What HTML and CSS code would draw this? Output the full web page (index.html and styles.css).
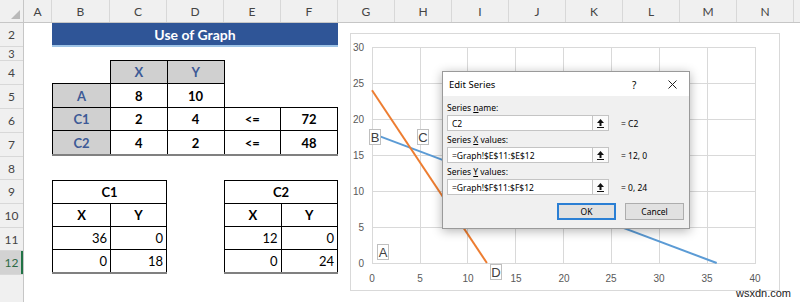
FILE: index.html
```html
<!DOCTYPE html>
<html lang="en">
<head>
  <meta charset="UTF-8" />
  <meta name="viewport" content="width=device-width, initial-scale=1.0"/>
  <title>Use of Graph</title>
  <link rel="stylesheet" href="styles.css">
</head>
<body>
  <div class="sheet">
    <div class="corner"><span class="corner-tri"></span></div>

    <div class="col-heads">
      <div class="ch ch-a">A</div>
      <div class="ch ch-b">B</div>
      <div class="ch">C</div>
      <div class="ch">D</div>
      <div class="ch">E</div>
      <div class="ch">F</div>
      <div class="ch">G</div>
      <div class="ch">H</div>
      <div class="ch">I</div>
      <div class="ch">J</div>
      <div class="ch">K</div>
      <div class="ch">L</div>
      <div class="ch">M</div>
      <div class="ch">N</div>
      <div class="ch ch-rest"></div>
    </div>

    <div class="row-heads">
      <div class="rh">2</div>
      <div class="rh rh-short">3</div>
      <div class="rh">4</div>
      <div class="rh">5</div>
      <div class="rh">6</div>
      <div class="rh">7</div>
      <div class="rh rh-23">8</div>
      <div class="rh">9</div>
      <div class="rh">10</div>
      <div class="rh rh-23">11</div>
      <div class="rh rh-sel">12</div>
      <div class="rh rh-rest"></div>
    </div>

    <div class="cells">
      <div class="title">Use of Graph</div>

      <table class="grid t1">
        <colgroup><col style="width:58px"><col><col><col><col></colgroup>
        <tr>
          <td class="blank"></td>
          <td class="hd">X</td>
          <td class="hd">Y</td>
          <td class="blank"></td>
          <td class="blank"></td>
        </tr>
        <tr>
          <td class="hd">A</td>
          <td>8</td>
          <td>10</td>
          <td class="blank"></td>
          <td class="blank"></td>
        </tr>
        <tr>
          <td class="hd">C1</td>
          <td>2</td>
          <td>4</td>
          <td>&lt;=</td>
          <td>72</td>
        </tr>
        <tr>
          <td class="hd">C2</td>
          <td>4</td>
          <td>2</td>
          <td>&lt;=</td>
          <td>48</td>
        </tr>
      </table>

      <table class="grid t2">
        <colgroup><col style="width:58px"><col></colgroup>
        <tr><td colspan="2">C1</td></tr>
        <tr><td>X</td><td>Y</td></tr>
        <tr><td class="num">36</td><td class="num">0</td></tr>
        <tr><td class="num">0</td><td class="num">18</td></tr>
      </table>

      <table class="grid t3">
        <tr><td colspan="2">C2</td></tr>
        <tr><td>X</td><td>Y</td></tr>
        <tr><td class="num">12</td><td class="num">0</td></tr>
        <tr><td class="num">0</td><td class="num">24</td></tr>
      </table>

      <div class="chart">
        <svg width="430" height="258" viewBox="0 0 430 258">
          <g class="gridlines">
            <line x1="22.5" y1="14" x2="22.5" y2="230.5"/>
            <line x1="70.5" y1="14" x2="70.5" y2="230.5"/>
            <line x1="117.5" y1="14" x2="117.5" y2="230.5"/>
            <line x1="165.5" y1="14" x2="165.5" y2="230.5"/>
            <line x1="213.5" y1="14" x2="213.5" y2="230.5"/>
            <line x1="261.5" y1="14" x2="261.5" y2="230.5"/>
            <line x1="309.5" y1="14" x2="309.5" y2="230.5"/>
            <line x1="357.5" y1="14" x2="357.5" y2="230.5"/>
            <line x1="405.5" y1="14" x2="405.5" y2="230.5"/>
            <line x1="22" y1="14.5" x2="406" y2="14.5"/>
            <line x1="22" y1="50.5" x2="406" y2="50.5"/>
            <line x1="22" y1="86.5" x2="406" y2="86.5"/>
            <line x1="22" y1="122.5" x2="406" y2="122.5"/>
            <line x1="22" y1="158.5" x2="406" y2="158.5"/>
            <line x1="22" y1="194.5" x2="406" y2="194.5"/>
            <line x1="22" y1="230.5" x2="406" y2="230.5"/>
          </g>
          <g class="axis-y">
            <text x="14" y="18">30</text>
            <text x="14" y="54">25</text>
            <text x="14" y="90">20</text>
            <text x="14" y="126">15</text>
            <text x="14" y="162">10</text>
            <text x="14" y="198">5</text>
            <text x="14" y="234">0</text>
          </g>
          <g class="axis-x">
            <text x="22" y="249">0</text>
            <text x="70" y="249">5</text>
            <text x="118" y="249">10</text>
            <text x="166" y="249">15</text>
            <text x="214" y="249">20</text>
            <text x="261" y="249">25</text>
            <text x="309" y="249">30</text>
            <text x="357" y="249">35</text>
            <text x="405" y="249">40</text>
          </g>
          <line class="s-c1" x1="22" y1="100.4" x2="366.7" y2="230"/>
          <line class="s-c2" x1="22" y1="57.2" x2="136.9" y2="230"/>
          <g class="pt">
            <rect x="27.5" y="211.5" width="11" height="15"/>
            <text x="33" y="224">A</text>
            <rect x="19.5" y="96.5" width="11" height="15"/>
            <text x="25" y="109">B</text>
            <rect x="67.5" y="96.5" width="11" height="15"/>
            <text x="73" y="109">C</text>
            <rect x="140.5" y="231.5" width="11" height="15"/>
            <text x="146" y="244">D</text>
          </g>
        </svg>
      </div>

      <div class="dialog">
        <div class="dlg-title">
          <span class="dlg-name">Edit Series</span>
          <span class="dlg-help">?</span>
          <svg class="dlg-close" width="9" height="9" viewBox="0 0 9 9">
            <path d="M0.5 0.5 L8.5 8.5 M8.5 0.5 L0.5 8.5" stroke="#222" stroke-width="1" fill="none"/>
          </svg>
        </div>
        <div class="dlg-body">
          <div class="field">
            <div class="lbl">Series <u>n</u>ame:</div>
            <div class="field-row">
              <div class="input">C2</div>
              <div class="ref-btn">
                <svg width="7" height="9" viewBox="0 0 7 9"><path d="M3.5 0 L7 4 L4.5 4 L4.5 7 L2.5 7 L2.5 4 L0 4 Z M0 8 H7 V9 H0 Z" fill="#111"/></svg>
              </div>
              <div class="val">= C2</div>
            </div>
          </div>
          <div class="field">
            <div class="lbl">Series <u>X</u> values:</div>
            <div class="field-row">
              <div class="input">=Graph!$E$11:$E$12</div>
              <div class="ref-btn">
                <svg width="7" height="9" viewBox="0 0 7 9"><path d="M3.5 0 L7 4 L4.5 4 L4.5 7 L2.5 7 L2.5 4 L0 4 Z M0 8 H7 V9 H0 Z" fill="#111"/></svg>
              </div>
              <div class="val">= 12, 0</div>
            </div>
          </div>
          <div class="field">
            <div class="lbl">Series <u>Y</u> values:</div>
            <div class="field-row">
              <div class="input">=Graph!$F$11:$F$12</div>
              <div class="ref-btn">
                <svg width="7" height="9" viewBox="0 0 7 9"><path d="M3.5 0 L7 4 L4.5 4 L4.5 7 L2.5 7 L2.5 4 L0 4 Z M0 8 H7 V9 H0 Z" fill="#111"/></svg>
              </div>
              <div class="val">= 0, 24</div>
            </div>
          </div>
          <div class="buttons">
            <div class="btn btn-ok">OK</div>
            <div class="btn">Cancel</div>
          </div>
        </div>
      </div>
    </div>

    <div class="watermark">wsxdn.com</div>
  </div>
</body>
</html>
```

FILE: styles.css
```css
body {
  margin: 0;
  padding: 0;
  background: #fff;
  font-family: Lato, "Liberation Sans", sans-serif;
  color: #000;
}

.sheet {
  position: relative;
  width: 800px;
  height: 302px;
  overflow: hidden;
  display: grid;
  grid-template-columns: 24px 1fr;
  grid-template-rows: 23px 1fr;
}

/* headers */
.corner {
  position: relative;
  background: #f0f0f0;
  border-right: 1px solid #c6c6c6;
  border-bottom: 1px solid #c6c6c6;
  box-sizing: border-box;
}

.corner-tri {
  position: absolute;
  right: 3px;
  bottom: 3px;
  width: 0;
  height: 0;
  border-left: 9px solid transparent;
  border-bottom: 9px solid #b9b9b9;
}

.col-heads {
  display: flex;
  background: #f0f0f0;
  border-bottom: 1px solid #c6c6c6;
  box-sizing: border-box;
}

.ch {
  flex: 0 0 57px;
  box-sizing: border-box;
  border-right: 1px solid #d8d8d8;
  display: flex;
  align-items: center;
  justify-content: center;
  font-size: 12px;
  color: #444;
  padding-top: 1px;
}

.ch-a { flex-basis: 28px; }
.ch-b { flex-basis: 58px; }
.ch-rest { flex: 1; border-right: none; }

.row-heads {
  display: flex;
  flex-direction: column;
  background: #f0f0f0;
  border-right: 1px solid #c6c6c6;
  box-sizing: border-box;
}

.rh {
  flex: 0 0 24px;
  box-sizing: border-box;
  border-bottom: 1px solid #d8d8d8;
  display: flex;
  align-items: center;
  justify-content: center;
  font-size: 12px;
  color: #444;
}

.rh-short { flex-basis: 13px; font-size: 11px; }
.rh-23 { flex-basis: 23px; }
.rh-rest { flex: 1; border-bottom: none; }

.rh-sel {
  background: #d2d2d2;
  color: #2d6a45;
  box-shadow: inset -2px 0 0 #217346;
}

/* cells */
.cells {
  position: relative;
  display: grid;
  grid-template-columns: 28px 58px repeat(12, 57px);
  grid-template-rows: 24px 13px 24px 24px 24px 24px 24px 23px 24px 24px 23px 24px;
}

.title {
  grid-column: 2 / 7;
  grid-row: 1;
  background: #2f5597;
  border-bottom: 2px solid #9dc3e6;
  color: #fff;
  font-weight: bold;
  font-size: 14px;
  display: flex;
  align-items: center;
  justify-content: center;
}

.grid {
  border-collapse: collapse;
  table-layout: fixed;
  width: 100%;
  height: 100%;
  font-size: 13px;
}

.grid td {
  border: 1px solid #000;
  padding: 0 3px;
  text-align: center;
  font-weight: bold;
}

.grid td.blank { border: none; }

.grid td.hd {
  background: #d0d0d0;
  color: #3d5a96;
}

.grid td.num {
  text-align: right;
  font-weight: normal;
}

.grid tr:last-child td {
  border-bottom: 2px solid #808080;
}

.t1 { grid-column: 2 / 7; grid-row: 3 / 7; }
.t2 { grid-column: 2 / 4; grid-row: 8 / 12; }
.t3 { grid-column: 5 / 7; grid-row: 8 / 12; }

/* chart object */
.chart {
  position: absolute;
  left: 326px;
  top: 10px;
  width: 430px;
  height: 258px;
  border: 1px solid #d9d9d9;
  box-sizing: border-box;
  background: #fff;
}

.chart svg {
  display: block;
  margin: -1px 0 0 -1px;
  font-family: "Liberation Sans", sans-serif;
}

.gridlines line {
  stroke: #d9d9d9;
  stroke-width: 1;
}

.axis-y text {
  font-size: 10px;
  fill: #595959;
  text-anchor: end;
}

.axis-x text {
  font-size: 10px;
  fill: #595959;
  text-anchor: middle;
}

.s-c1 { stroke: #5b9bd5; stroke-width: 2; }
.s-c2 { stroke: #ed7d31; stroke-width: 2; }

.pt rect {
  fill: #fff;
  stroke: #bfbfbf;
  stroke-width: 1;
}

.pt text {
  font-size: 13px;
  fill: #404040;
  text-anchor: middle;
}

/* dialog */
.dialog {
  position: absolute;
  left: 418px;
  top: 48px;
  width: 248px;
  height: 158px;
  box-sizing: border-box;
  background: #f0f0f0;
  border: 1px solid #9a9a9a;
  box-shadow: 0 2px 10px rgba(0,0,0,0.3);
  font-family: "Noto Sans", "Open Sans", sans-serif;
  font-size: 8.5px;
  color: #000;
}

.dlg-title {
  position: relative;
  height: 24px;
  background: #fff;
  display: flex;
  align-items: center;
  padding-left: 6px;
  font-size: 9.5px;
}

.dlg-help {
  position: absolute;
  left: 189px;
  top: 6px;
  font-size: 10px;
}

.dlg-close {
  position: absolute;
  left: 225px;
  top: 8px;
}

.dlg-body {
  padding: 6px 5px 0 4px;
}

.field + .field { margin-top: 3px; }

.lbl {
  height: 12px;
  line-height: 12px;
  margin-bottom: 1px;
}

.field-row {
  display: flex;
  align-items: center;
  height: 16px;
}

.input {
  width: 145px;
  height: 16px;
  box-sizing: border-box;
  background: #fff;
  border: 1px solid #c4c4c4;
  border-right: none;
  padding-left: 4px;
  display: flex;
  align-items: center;
}

.ref-btn {
  width: 17px;
  height: 16px;
  box-sizing: border-box;
  background: #fbfbfb;
  border: 1px solid #c4c4c4;
  display: flex;
  align-items: center;
  justify-content: center;
}

.val {
  margin-left: 12px;
}

.buttons {
  display: flex;
  justify-content: flex-end;
  gap: 9px;
  margin-top: 8px;
}

.btn {
  width: 59px;
  height: 17px;
  box-sizing: border-box;
  background: #e1e1e1;
  border: 1px solid #adadad;
  display: flex;
  align-items: center;
  justify-content: center;
}

.btn-ok {
  border: 2px solid #2b7fd4;
}

.watermark {
  position: absolute;
  right: 9px;
  bottom: 3px;
  font-family: "Liberation Sans", sans-serif;
  font-size: 11px;
  color: #222;
}
```
